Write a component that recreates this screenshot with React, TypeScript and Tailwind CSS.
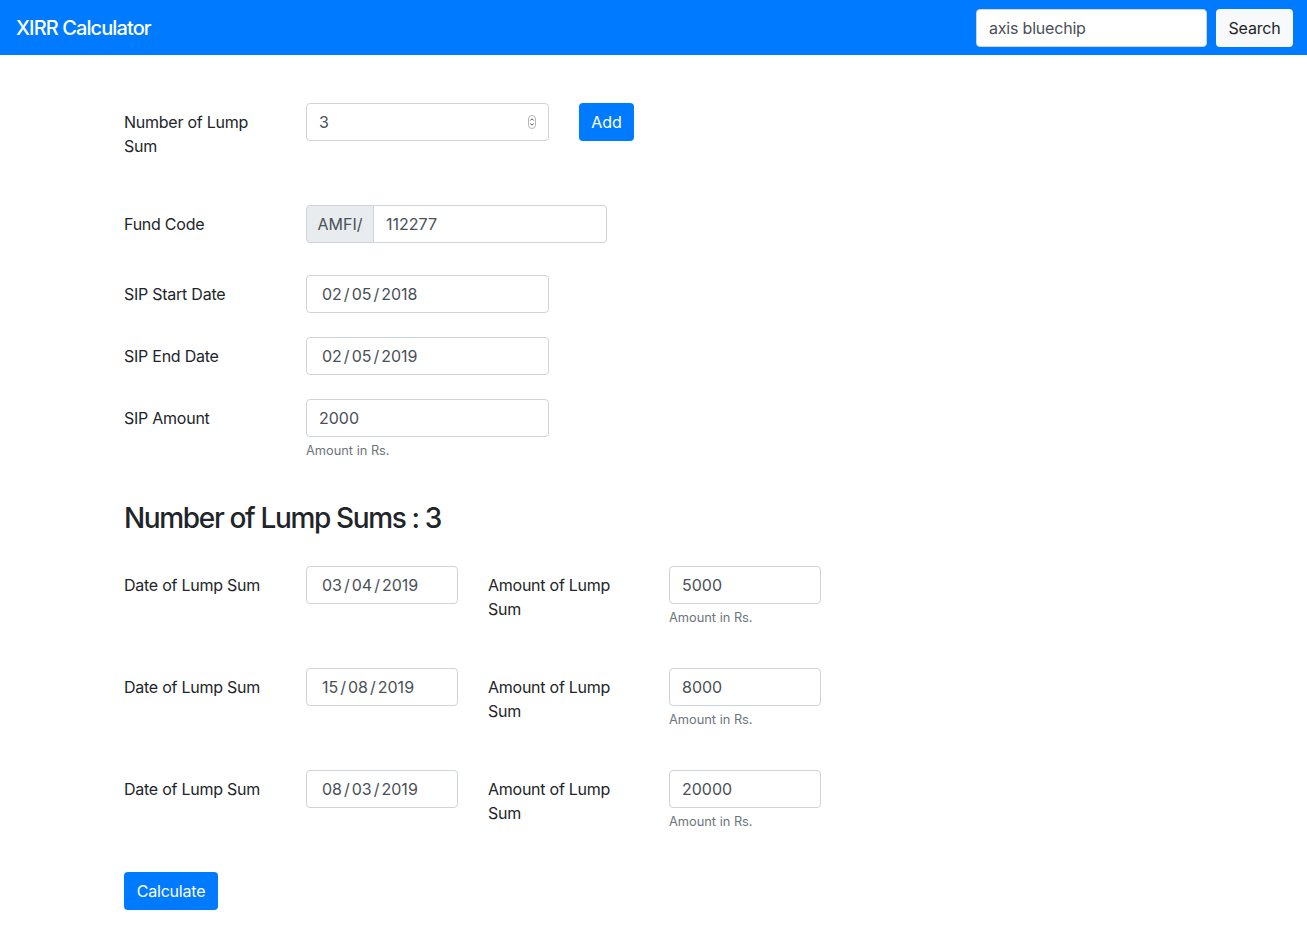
import React from "react";

const font = { fontFamily: "Inter, 'Noto Sans', 'Liberation Sans', sans-serif" };

function Field({ children, className = "", pl = "pl-[12px]" }: { children: React.ReactNode; className?: string; pl?: string }) {
  return (
    <div
      className={`h-[38px] border border-[#ced4da] rounded-[4px] bg-white flex items-center ${pl} text-[16px] text-[#495057] ${className}`}
    >
      {children}
    </div>
  );
}

function DateText({ d }: { d: string }) {
  const [a, b, c] = d.split("/");
  return (
    <span className="flex items-center">
      <span>{a}</span>
      <span className="mx-[2px]">/</span>
      <span>{b}</span>
      <span className="mx-[2px]">/</span>
      <span>{c}</span>
    </span>
  );
}

function Label({ children, className = "" }: { children: React.ReactNode; className?: string }) {
  return (
    <div className={`w-[152px] pt-[7px] leading-[24px] text-[16px] text-[#212529] tracking-[-0.25px] ${className}`}>
      {children}
    </div>
  );
}

function Help() {
  return <div className="mt-[4px] text-[12.8px] leading-[19px] text-[#6c757d]">Amount in Rs.</div>;
}

export default function App() {
  const lumps = [
    { date: "03/04/2019", amt: "5000" },
    { date: "15/08/2019", amt: "8000" },
    { date: "08/03/2019", amt: "20000" },
  ];
  return (
    <div style={font} className="min-h-[939px] bg-white text-[#212529]">
      <nav className="h-[55px] bg-[#007bff] flex items-center justify-between pl-[16px] pr-[14px]">
        <div className="text-white text-[20px] font-medium tracking-[-0.9px]">XIRR Calculator</div>
        <div className="flex items-center gap-[9px]">
          <div className="w-[231px] h-[38px] bg-white rounded-[4px] border border-[#ced4da] flex items-center pl-[12px] text-[16px] text-[#495057] tracking-[-0.2px]">
            axis bluechip
          </div>
          <div className="w-[77px] h-[38px] bg-[#f8f9fa] rounded-[4px] flex items-center justify-center text-[16px] text-[#212529] tracking-[-0.2px]">
            Search
          </div>
        </div>
      </nav>

      <div className="pl-[124px] pt-[48px]">
        {/* Number of lump sum */}
        <div className="flex items-start">
          <Label>Number of Lump Sum</Label>
          <div className="ml-[30px] w-[243px]">
            <Field className="justify-between pr-[12px]">
              <span>3</span>
              <svg width="8" height="14" viewBox="0 0 8 14">
                <rect x="0.5" y="0.5" width="7" height="13" rx="3.5" fill="none" stroke="#b5b5b5" strokeWidth="1" />
                <path d="M2.3 5.5 L4 3.8 L5.7 5.5" fill="none" stroke="#555" strokeWidth="1" />
                <path d="M2.3 8.5 L4 10.2 L5.7 8.5" fill="none" stroke="#555" strokeWidth="1" />
              </svg>
            </Field>
          </div>
          <div className="ml-[30px] w-[55px] h-[38px] bg-[#007bff] rounded-[4px] text-white text-[16px] flex items-center justify-center">
            Add
          </div>
        </div>

        {/* Fund code */}
        <div className="flex items-start mt-[47px]">
          <Label>Fund Code</Label>
          <div className="ml-[30px] flex">
            <div className="h-[38px] w-[68px] bg-[#e9ecef] border border-[#ced4da] rounded-l-[4px] flex items-center justify-center text-[16px] text-[#495057]">
              AMFI/
            </div>
            <div className="h-[38px] w-[233px] bg-white border border-l-0 border-[#ced4da] rounded-r-[4px] flex items-center pl-[12px] text-[16px] text-[#495057]">
              112277
            </div>
          </div>
        </div>

        <div className="flex items-start mt-[32px]">
          <Label>SIP Start Date</Label>
          <div className="ml-[30px] w-[243px]">
            <Field pl="pl-[15px]">
              <DateText d="02/05/2018" />
            </Field>
          </div>
        </div>

        <div className="flex items-start mt-[24px]">
          <Label>SIP End Date</Label>
          <div className="ml-[30px] w-[243px]">
            <Field pl="pl-[15px]">
              <DateText d="02/05/2019" />
            </Field>
          </div>
        </div>

        <div className="flex items-start mt-[24px]">
          <Label>SIP Amount</Label>
          <div className="ml-[30px] w-[243px]">
            <Field>2000</Field>
            <Help />
          </div>
        </div>

        <h3 className="mt-[41px] text-[28px] leading-[34px] font-medium text-[#212529] tracking-[-1.35px]">
          Number of Lump Sums : 3
        </h3>

        <div className="mt-[31px] flex flex-col gap-[41px]">
          {lumps.map((l, i) => (
            <div key={i} className="flex items-start">
              <Label>Date of Lump Sum</Label>
              <div className="ml-[30px] w-[152px]">
                <Field pl="pl-[15px]">
                  <DateText d={l.date} />
                </Field>
              </div>
              <Label className="ml-[30px]">Amount of Lump Sum</Label>
              <div className="ml-[29px] w-[152px]">
                <Field>{l.amt}</Field>
                <Help />
              </div>
            </div>
          ))}
        </div>

        <div className="mt-[41px] w-[94px] h-[38px] bg-[#007bff] rounded-[4px] text-white text-[16px] flex items-center justify-center tracking-[-0.2px]">
          Calculate
        </div>
      </div>
    </div>
  );
}
